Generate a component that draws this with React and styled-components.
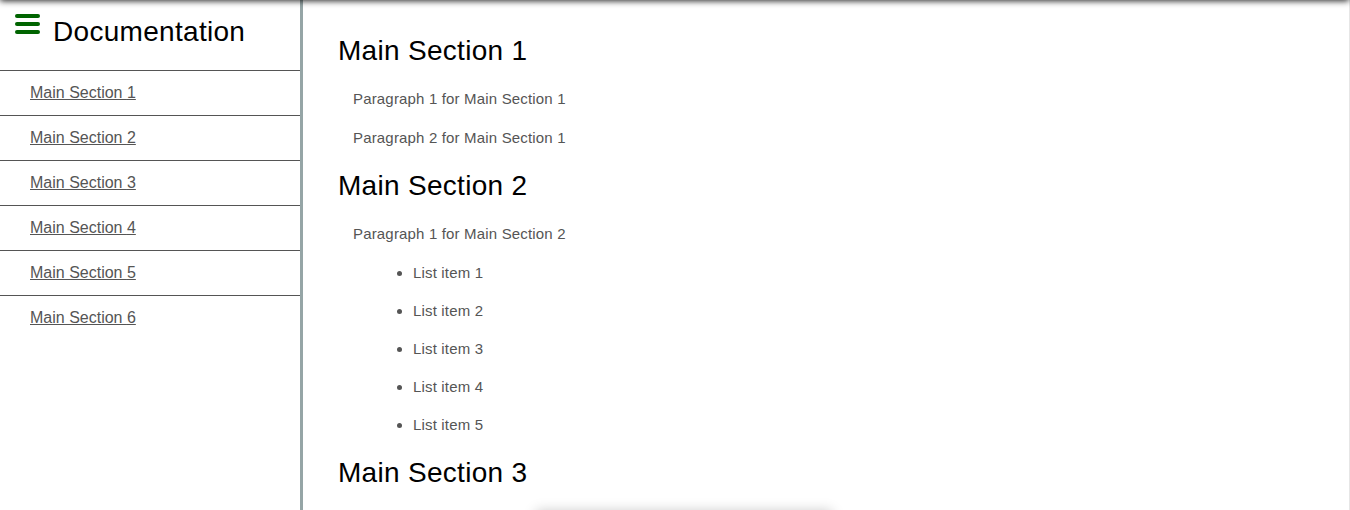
import React from 'react';
import styled, { createGlobalStyle } from 'styled-components';

const GlobalStyle = createGlobalStyle`
  html, body {
    margin: 0;
    padding: 0;
    overflow: hidden;
    background: #fff;
    font-family: "Liberation Sans", Arial, sans-serif;
  }
`;

const Page = styled.div`
  display: flex;
  height: 100vh;
  border-right: 1px solid #e6e6e6;
  box-sizing: border-box;
  position: relative;
`;

const TopShadow = styled.div`
  position: absolute;
  top: -10px;
  left: 0;
  right: 0;
  height: 10px;
  box-shadow: 0 1px 6px rgba(0, 0, 0, 0.85);
  z-index: 5;
`;

const Sidebar = styled.aside`
  width: 300px;
  flex-shrink: 0;
  border-right: 3px solid #95a5a6;
  height: 100%;
`;

const SidebarHeader = styled.div`
  height: 70px;
  display: flex;
  align-items: flex-start;
  padding: 14px 0 0 15px;
  box-sizing: border-box;
  gap: 13px;
`;

const MenuIcon = styled.svg`
  width: 25px;
  height: 20px;
  flex-shrink: 0;
`;

const Title = styled.h1`
  margin: 2px 0 0;
  font-size: 28px;
  line-height: 32px;
  font-weight: 400;
  letter-spacing: 0.3px;
  color: #000;
`;

const NavList = styled.ul`
  list-style: none;
  margin: 0;
  padding: 0;
`;

const NavItem = styled.li`
  border-top: 1px solid #555;
  height: 45px;
  box-sizing: border-box;
  display: flex;
  align-items: center;
  padding-left: 30px;
`;

const NavLink = styled.a`
  color: #555;
  font-size: 16px;
  text-decoration: underline;
`;

const Main = styled.main`
  flex: 1;
  padding: 32px 0 0 35px;
  display: flex;
  flex-direction: column;
  align-items: flex-start;
  overflow: hidden;

  & > * {
    flex-shrink: 0;
  }
`;

const Heading = styled.h2`
  margin: 3px 0 22px;
  font-size: 28px;
  line-height: 32px;
  font-weight: 400;
  letter-spacing: 0.3px;
  color: #000;
`;

const Paragraph = styled.p`
  margin: 0 0 19px 15px;
  font-size: 15px;
  line-height: 20px;
  letter-spacing: 0.17px;
  color: #555;
`;

const List = styled.ul`
  margin: 0 0 19px 15px;
  padding-left: 60px;
  color: #555;
  font-size: 15px;
  line-height: 20px;
  letter-spacing: 0.17px;
`;

const ListItem = styled.li`
  margin-bottom: 18px;
  &:last-child {
    margin-bottom: 0;
  }
`;

const Figure = styled.div`
  margin: 0 0 0 198px;
  width: 296px;
  height: 200px;
  background: #fff;
  box-shadow: 0 0 12px rgba(0, 0, 0, 0.22);
`;

const navItems = [1, 2, 3, 4, 5, 6];

export default function App() {
  return (
    <>
      <GlobalStyle />
      <Page>
        <TopShadow />
        <Sidebar>
          <SidebarHeader>
            <MenuIcon viewBox="0 0 25 20">
              <g stroke="#006400" strokeWidth="4" strokeLinecap="round">
                <line x1="2" y1="2" x2="23" y2="2" />
                <line x1="2" y1="10" x2="23" y2="10" />
                <line x1="2" y1="18" x2="23" y2="18" />
              </g>
            </MenuIcon>
            <Title>Documentation</Title>
          </SidebarHeader>
          <NavList>
            {navItems.map(n => (
              <NavItem key={n}>
                <NavLink href={`#section-${n}`}>Main Section {n}</NavLink>
              </NavItem>
            ))}
          </NavList>
        </Sidebar>
        <Main>
          <Heading>Main Section 1</Heading>
          <Paragraph>Paragraph 1 for Main Section 1</Paragraph>
          <Paragraph>Paragraph 2 for Main Section 1</Paragraph>
          <Heading>Main Section 2</Heading>
          <Paragraph>Paragraph 1 for Main Section 2</Paragraph>
          <List>
            {[1, 2, 3, 4, 5].map(n => (
              <ListItem key={n}>List item {n}</ListItem>
            ))}
          </List>
          <Heading>Main Section 3</Heading>
          <Figure />
        </Main>
      </Page>
    </>
  );
}
